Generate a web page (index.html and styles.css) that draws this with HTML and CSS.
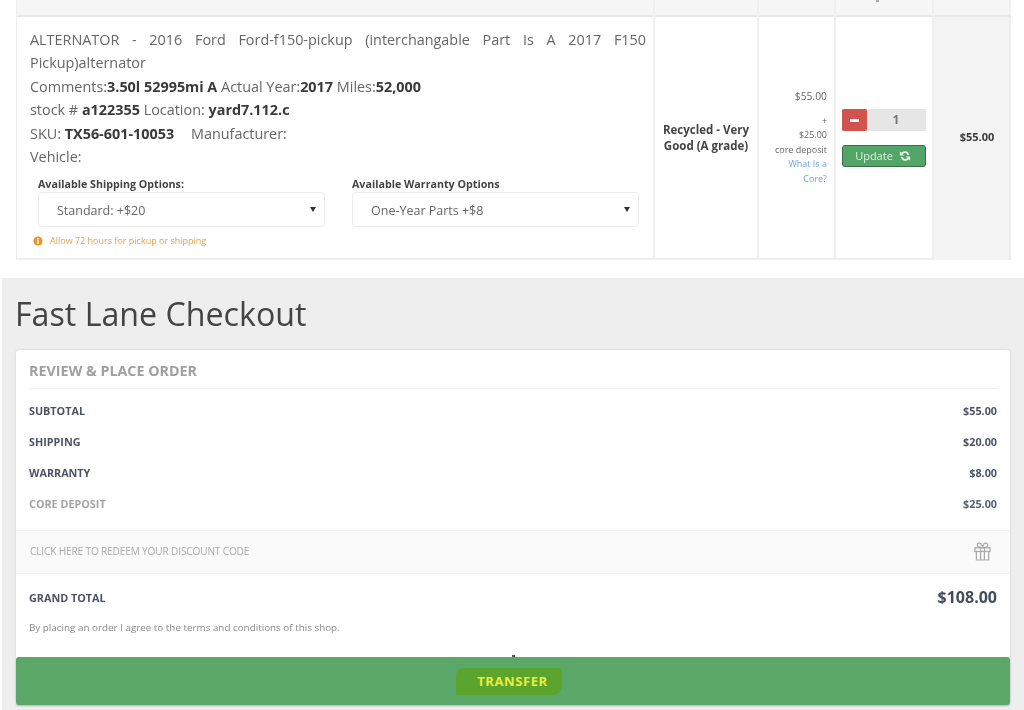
FILE: index.html
```html
<!DOCTYPE html>
<html lang="en">
<head>
<meta charset="utf-8">
<title>Fast Lane Checkout</title>
<link rel="stylesheet" href="styles.css">
</head>
<body>
<div class="page">
  <section class="cart">
    <div class="table">
      <div class="head-cell"></div>
      <div class="head-cell"></div>
      <div class="head-cell"></div>
      <div class="head-cell head-qty"><span class="head-mark"></span></div>
      <div class="head-cell"></div>

      <div class="cell product">
        <p class="title">ALTERNATOR - 2016 Ford Ford-f150-pickup (interchangable Part Is A 2017 F150 Pickup)alternator</p>
        <p class="line">Comments:<b>3.50l 52995mi A</b> Actual Year:<b>2017</b> Miles:<b>52,000</b></p>
        <p class="line">stock # <b>a122355</b> Location: <b>yard7.112.c</b></p>
        <p class="line">SKU: <b>TX56-601-10053</b> <span class="mfr">Manufacturer:</span></p>
        <p class="line">Vehicle:</p>
        <div class="options">
          <div class="option">
            <div class="option-label">Available Shipping Options:</div>
            <div class="select"><span>Standard: +$20</span><i class="caret"></i></div>
          </div>
          <div class="option">
            <div class="option-label">Available Warranty Options</div>
            <div class="select"><span>One-Year Parts +$8</span><i class="caret"></i></div>
          </div>
        </div>
        <div class="note">
          <svg class="note-icon" viewBox="0 0 12 12"><circle cx="6" cy="6" r="5.5" fill="#e8912d"/><rect x="5" y="5" width="2" height="4.4" fill="#fff"/><rect x="5" y="2.5" width="2" height="1.7" fill="#fff"/></svg>
          <span>Allow 72 hours for pickup or shipping</span>
        </div>
      </div>

      <div class="cell grade"><b>Recycled - Very Good (A grade)</b></div>

      <div class="cell price">
        <div class="price-main">$55.00</div>
        <div class="price-small">+</div>
        <div class="price-small">$25.00</div>
        <div class="price-small">core deposit</div>
        <a class="price-link">What Is a Core?</a>
      </div>

      <div class="cell qty">
        <div class="stepper">
          <span class="minus"><i></i></span>
          <span class="count">1</span>
        </div>
        <button class="update">Update
          <svg class="refresh" viewBox="0 0 16 16"><path d="M13.800 6.600A6 6 0 0 0 3.200 3.800L1.200 1.800V7.400h5.600L4.900 5.500a3.700 3.700 0 0 1 6.500 1.100zM2.200 9.400a6 6 0 0 0 10.600 2.800l2 2V8.600H9.200l1.900 1.900a3.700 3.700 0 0 1-6.500-1.100z" fill="#e8f3ea"/></svg>
        </button>
      </div>

      <div class="cell total"><b>$55.00</b></div>
    </div>
  </section>

  <section class="checkout">
    <h1>Fast Lane Checkout</h1>
    <div class="card">
      <div class="card-body">
        <h2>REVIEW &amp; PLACE ORDER</h2>
        <div class="row"><span>SUBTOTAL</span><span>$55.00</span></div>
        <div class="row"><span>SHIPPING</span><span>$20.00</span></div>
        <div class="row"><span>WARRANTY</span><span>$8.00</span></div>
        <div class="row row-muted"><span>CORE DEPOSIT</span><span>$25.00</span></div>
      </div>
      <div class="discount">
        <span>CLICK HERE TO REDEEM YOUR DISCOUNT CODE</span>
        <svg class="gift" viewBox="0 0 18 20" fill="none" stroke="#a9a9a9" stroke-width="1.3"><rect x="1" y="6" width="16" height="4"/><path d="M2.500 10v9h13v-9M7 6v13M11 6v13M9 6C6 6 3.500 5 3.500 3S6 .6 7.300 2 9 6 9 6zM9 6c3 0 5.500-1 5.500-3S12 .6 10.700 2 9 6 9 6z"/></svg>
      </div>
      <div class="grand">
        <div class="grand-row"><span class="grand-label">GRAND TOTAL</span><span class="grand-value">$108.00</span></div>
        <p class="terms">By placing an order I agree to the terms and conditions of this shop.</p>
      </div>
      <button class="transfer"><span class="highlight">TRANSFER</span></button>
    </div>
  </section>
</div>
</body>
</html>
```
FILE: styles.css
```css
* { box-sizing: border-box; }
html, body { margin: 0; padding: 0; background: #fff; }
body { font-family: "Open Sans", "Liberation Sans", sans-serif; color: #666; }
.page { width: 1024px; height: 710px; overflow: hidden; filter: blur(.45px); }
p { margin: 0; }
b { color: #3a3a3a; font-weight: 700; }

.cart { padding: 0 14px 0 16px; height: 278px; }
.table {
  display: grid;
  grid-template-columns: 638px 104px 77px 98px 77px;
  grid-template-rows: 17px 243px;
  border-bottom: 2px solid #efefef;
  border-left: 1px solid #eee;
  height: 260px;
}
.head-cell { background: #f6f6f6; border-bottom: 2px solid #e8e8e8; border-right: 2px solid #f0f0f0; }
.head-qty { display: flex; justify-content: center; }
.head-mark { width: 3px; height: 2px; background: #aaa; margin-right: 14px; }
.cell { border-right: 2px solid #f0f0f0; }

.product { padding: 11px 7px 0 13px; font-size: 14.4px; line-height: 23.4px; }
.title { text-align: justify; }
.mfr { margin-left: 13px; }
.options { display: flex; gap: 27px; margin: 9px 0 0 8px; }
.option { width: 287px; }
.option-label { font-size: 10.7px; font-weight: 700; line-height: 14px; color: #444; }
.select {
  display: flex; align-items: center; justify-content: space-between;
  height: 35px; margin-top: 1px; padding: 1px 8px 0 18px;
  border: 1px solid #ececec; border-radius: 4px; font-size: 12.5px; color: #666; background: #fff;
}
.caret { width: 0; height: 0; border-left: 3px solid transparent; border-right: 3px solid transparent; border-top: 5px solid #333; margin-top: -2px; }
.note { display: flex; align-items: center; gap: 7px; margin: 7px 0 0 3px; font-size: 9px; line-height: 14px; color: #e6a04a; }
.note-icon { width: 10px; height: 10px; }

.grade { display: flex; align-items: center; justify-content: center; text-align: center; font-size: 11.500px; line-height: 16px; padding: 0 3px; margin-top: -1px; }
.grade b { color: #444; }

.price { text-align: right; padding: 70px 7px 0 0; font-size: 9px; line-height: 14.6px; color: #666; }
.price-main { font-size: 10.3px; line-height: 18px; margin-bottom: 8.500px; }
.price-link { display: block; color: #6ea6e6; padding-left: 24px; }

.qty { padding: 92px 7px 0 6px; display: flex; flex-direction: column; gap: 14px; }
.stepper { display: flex; height: 22px; background: #e6e6e6; width: 84px; }
.minus { width: 25px; background: #d0534d; border-radius: 2px; display: flex; align-items: center; justify-content: center; }
.minus i { width: 9px; height: 3px; background: #fff; }
.count { flex: 1; text-align: center; font-size: 12px; font-weight: 700; line-height: 22px; color: #777; padding-right: 1px; }
.update {
  height: 22px; padding: 0 2px 2px 0; width: 84px; display: flex; align-items: center; justify-content: center; gap: 6px;
  font: 400 11px "Open Sans", sans-serif; color: #dff0e2; background: #51a566; border: 1px solid #3b6c49; border-radius: 3px;
}
.refresh { width: 12px; height: 12px; margin-top: 2px; }

.total { background: #f3f3f3; border-right: 2px solid #ededed; display: flex; align-items: center; justify-content: center; font-size: 11px; padding: 0 0 4px 11px; }

.checkout { height: 432px; margin-left: 2px; background: #eeeeee; padding: 0 14px 0 14px; }
h1 { margin: 0 0 0 -1px; padding-top: 14px; font-size: 32.2px; font-weight: 400; line-height: 44px; color: #444; height: 72px; }
.card { background: #fff; border-radius: 4px; box-shadow: 0 0 3px rgba(0,0,0,.12); height: 355px; }
.card-body { padding: 10px 13px 0; height: 180px; }
h2 {
  margin: 0 0 6px; padding-bottom: 6px; font-size: 14.3px; line-height: 22px; font-weight: 700; color: #a0a0a0;
  border-bottom: 1px solid #efefef;
}
.row { display: flex; justify-content: space-between; font-size: 10.8px; font-weight: 700; line-height: 16px; color: #4d5364; padding: 7.500px 0 7.800px; }
.row-muted span:first-child { color: #a3a3a3; }
.row-muted span:last-child { color: #5a5f6d; }

.discount {
  display: flex; align-items: center; justify-content: space-between;
  height: 44px; padding: 0 19px 0 14px; background: #fafafa;
  border-top: 1px solid #f1f1f1; border-bottom: 1px solid #f1f1f1;
  font-size: 10.1px; letter-spacing: -.15px; color: #aaa;
}
.discount span { margin-bottom: 2px; }
.gift { width: 17px; height: 19px; margin-bottom: 2px; }

.grand { height: 83px; padding: 12px 13px 0; }
.grand-row { display: flex; justify-content: space-between; align-items: center; height: 22px; }
.grand-label { font-size: 10.8px; font-weight: 700; color: #4d5364; }
.grand-value { font-size: 16px; font-weight: 700; color: #454c5e; margin-bottom: 1px; }
.terms { margin-top: 12px; font-size: 9.85px; line-height: 14px; color: #888; }

.transfer {
  position: relative;
  display: flex; align-items: center; justify-content: center;
  width: 100%; height: 48px; padding: 0; border: 0; border-radius: 3px;
  background: #5aa768; box-shadow: 0 1px 2px rgba(0,0,0,.2);
  font: 700 13px "Open Sans", sans-serif; letter-spacing: .6px; color: #e9ee3d;
}
.transfer::before { content: ""; position: absolute; left: 496px; top: -2px; width: 3px; height: 2px; background: #555; }
.highlight { padding: 4px 14px 5px 21px; margin-left: -8px; background: #5ba52f; border-radius: 8px 3px 9px 2px; }
```
